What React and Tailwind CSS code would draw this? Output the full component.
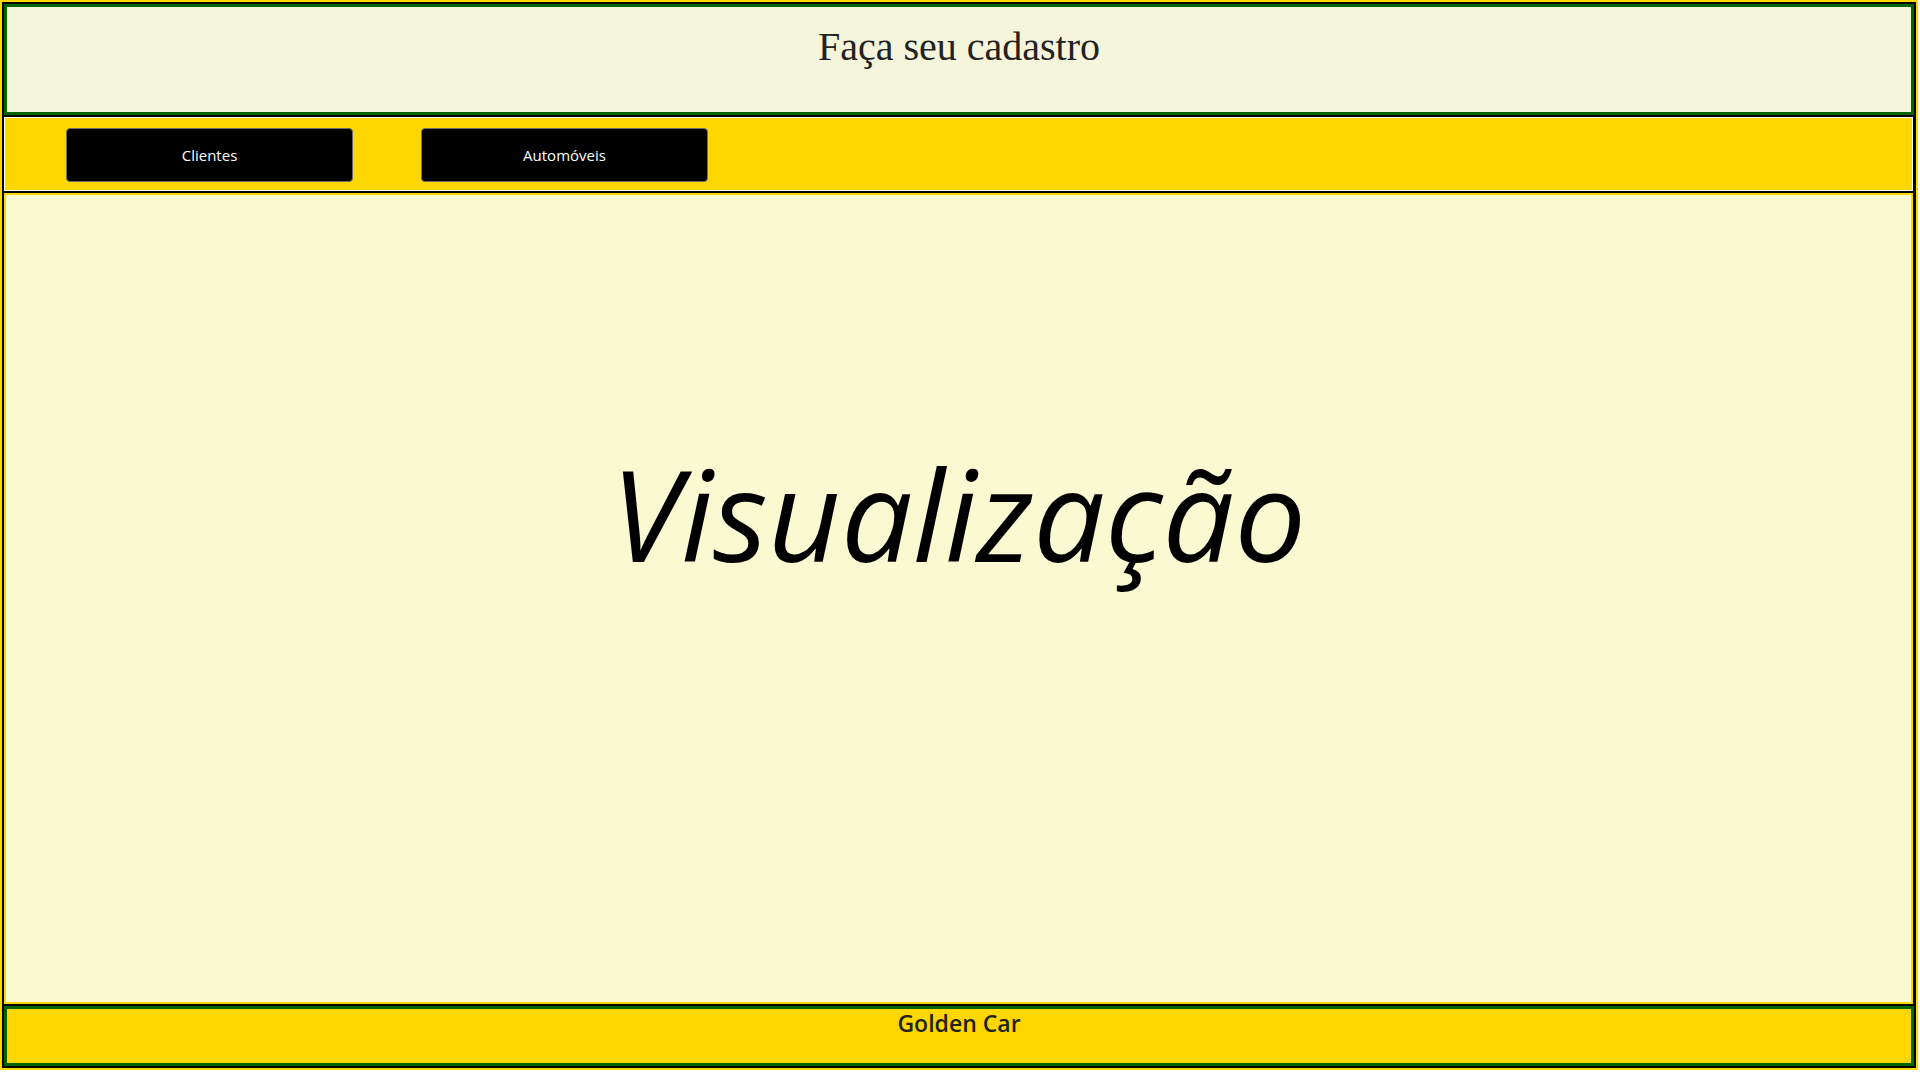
import React from 'react';

const Botao = ({ children }) => (
  <button className="w-[287px] h-[54px] bg-black text-white border border-[#6b6b6b] rounded-[4px] text-[15px] font-['Open_Sans',sans-serif] flex items-center justify-center">
    {children}
  </button>
);

export default function App() {
  return (
    <div className="w-[1918px] border-2 border-[#ffd700]">
      <div className="bg-black p-[2px] flex flex-col gap-[2px]">
        {/* Cabeçalho */}
        <header className="h-[111px] border-[3px] border-[#006400] bg-[#f5f5dc] pt-[20px] flex justify-center">
          <h1 className="text-[40px] leading-none text-[#222] font-['Liberation_Serif',serif] font-normal">
            Faça seu cadastro
          </h1>
        </header>

        {/* Menu */}
        <nav className="h-[74px] mr-[1px] border border-white bg-[#ffd700] pt-[10px] pl-[61px] flex items-start gap-[68px]">
          <Botao>Clientes</Botao>
          <Botao>Automóveis</Botao>
        </nav>

        {/* Conteúdo */}
        <main className="h-[811px] mr-[1px] border-2 border-[#ffd700] bg-[#fafad2] pt-[254px] flex justify-center">
          <p className="text-[127px] leading-none italic text-black font-['Open_Sans',sans-serif]">
            Visualização
          </p>
        </main>

        {/* Rodapé */}
        <footer className="h-[60px] border-[3px] border-[#006400] bg-[#ffd700] pt-[3px] flex justify-center">
          <span className="text-[23px] leading-[23px] font-semibold text-[#222] font-['Open_Sans',sans-serif]">
            Golden Car
          </span>
        </footer>
      </div>
    </div>
  );
}
